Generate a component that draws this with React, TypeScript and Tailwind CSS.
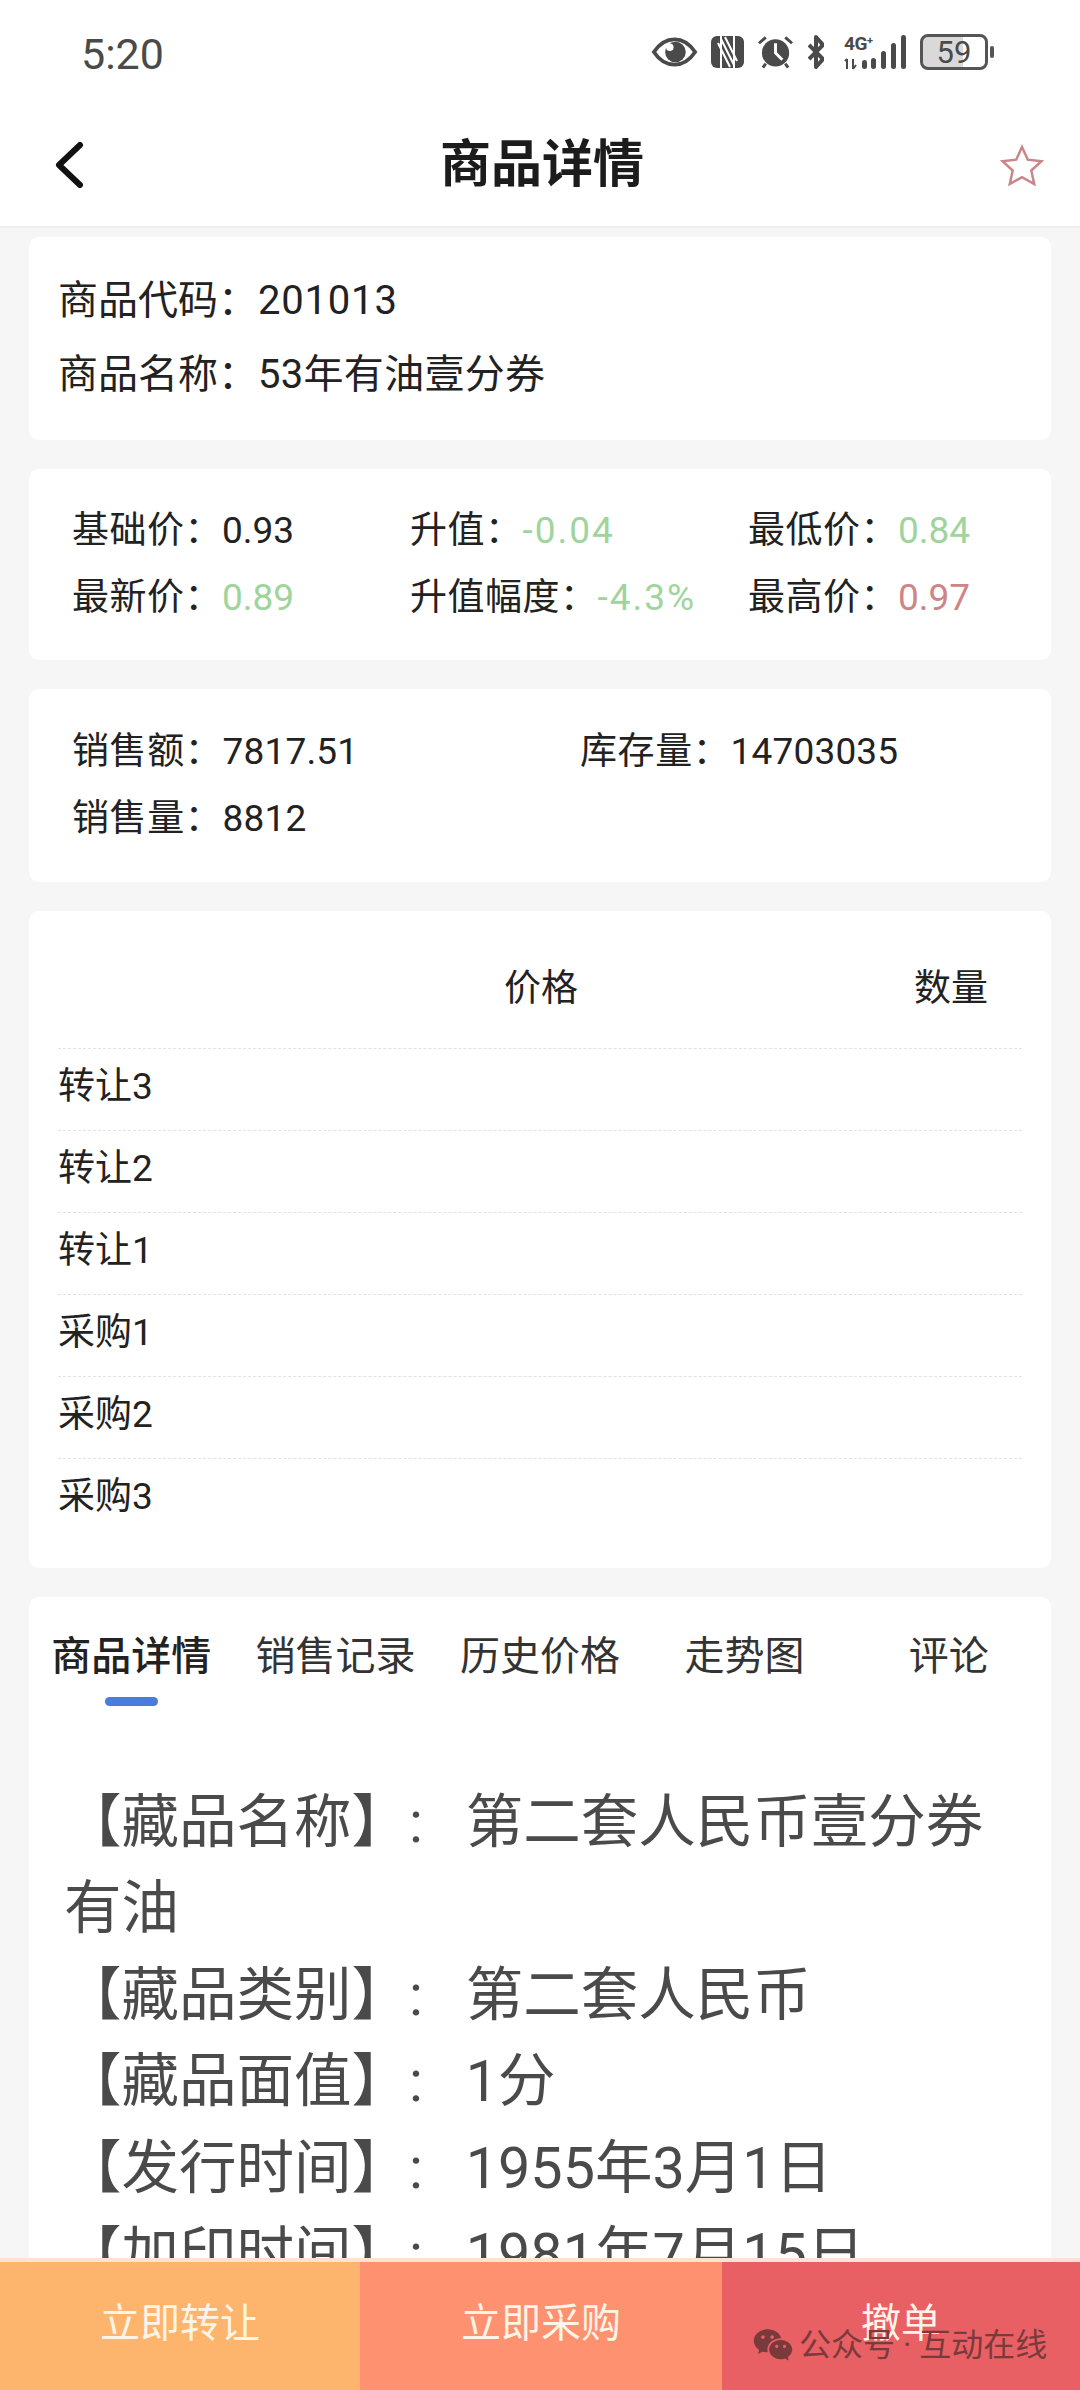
import { RiWechatFill } from "react-icons/ri";

const detailLines = [
  { label: "【藏品名称】", value: "第二套人民币壹分券有油" },
  { label: "【藏品类别】", value: "第二套人民币" },
  { label: "【藏品面值】", value: "1分" },
  { label: "【发行时间】", value: "1955年3月1日" },
  { label: "【加印时间】", value: "1981年7月15日" },
];

const priceStats = [
  { label: "基础价：", value: "0.93", color: "text-[#222222]" },
  { label: "升值：", value: "-0.04", color: "tracking-[2px] text-[#9fd49c]" },
  { label: "最低价：", value: "0.84", color: "text-[#9fd49c]" },
  { label: "最新价：", value: "0.89", color: "text-[#9fd49c]" },
  { label: "升值幅度：", value: "-4.3%", color: "tracking-[2px] text-[#9fd49c]" },
  { label: "最高价：", value: "0.97", color: "text-[#cf8587]" },
];

const salesStats = [
  { label: "销售额：", value: "7817.51" },
  { label: "库存量：", value: "14703035" },
  { label: "销售量：", value: "8812" },
];

const orderRows = ["转让3", "转让2", "转让1", "采购1", "采购2", "采购3"];
const tabs = ["商品详情", "销售记录", "历史价格", "走势图", "评论"];

function StatusIcons() {
  return (
    <div className="flex items-center text-[#4a4a4a]">
      {/* eye */}
      <svg viewBox="0 0 48 32" className="h-[30px] w-[47px]" fill="none">
        <path d="M2 16C8 7 15 2.500 24 2.500S40 7 46 16c-6 9-13 13.500-22 13.500S8 25 2 16Z" stroke="currentColor" strokeWidth="4" />
        <circle cx="25" cy="16" r="11" fill="currentColor" />
        <circle cx="19" cy="11" r="4" fill="white" />
      </svg>
      {/* nfc */}
      <svg viewBox="0 0 33 32" className="ml-[13px] h-[32px] w-[33px]" fill="none">
        <rect x="0" y="0" width="33" height="32" rx="6" fill="currentColor" />
        <path d="M10 0V32M23 0V32M10 3 23 29M14 1 26 25M7 7 19 31" stroke="white" strokeWidth="2" />
      </svg>
      {/* alarm */}
      <svg viewBox="0 0 38 34" className="ml-[13px] h-[34px] w-[37px]" fill="none">
        <circle cx="19" cy="18" r="14" fill="currentColor" />
        <path d="M19 8V18L26 25" stroke="white" strokeWidth="3" />
        <path d="M2 8 9 2M36 8 29 2M6 33 9 29M32 33 29 29" stroke="currentColor" strokeWidth="3" />
      </svg>
      {/* bluetooth */}
      <svg viewBox="0 0 16 34" className="ml-[14px] h-[34px] w-[16px]" fill="none">
        <path d="M1 10 15 24 8 32V2L15 10 1 24" stroke="currentColor" strokeWidth="4" strokeLinejoin="round" />
      </svg>
      {/* 4G+ and signal bars */}
      <svg viewBox="0 0 62 35" className="ml-[20px] h-[35px] w-[62px]" fill="currentColor">
        <text x="0" y="15" fontFamily="Roboto, sans-serif" fontSize="19" fontWeight="700" letterSpacing="-0.5">4G</text>
        <text x="23" y="9" fontFamily="Roboto, sans-serif" fontSize="11" fontWeight="700">+</text>
        <path d="M3 24V34M1 26 3 24M9 24V34M9 34 12 30" stroke="currentColor" strokeWidth="2" fill="none" />
        <rect x="18" y="25" width="5" height="9" rx="2.500" />
        <rect x="27" y="23" width="5" height="11" rx="2.500" />
        <rect x="37" y="16" width="5" height="18" rx="2.500" />
        <rect x="47" y="8" width="5" height="26" rx="2.500" />
        <rect x="57" y="0" width="5" height="34" rx="2.500" />
      </svg>
      {/* battery */}
      <div className="ml-[14px] flex h-[36px] w-[68px] items-center justify-center rounded-[8px] border-[3px] border-[#555555] bg-[linear-gradient(90deg,#d9d9d9_65%,#ffffff_65%)] font-['Roboto',sans-serif] text-[31px] leading-none text-[#4a4a4a]">
        59
      </div>
      <div className="ml-[2px] h-[12px] w-[4px] rounded-full bg-[#555555]" />
    </div>
  );
}

function TopBar() {
  return (
    <header className="shrink-0 border-b-2 border-[#eeeeee] bg-white">
      <div className="flex h-[108px] items-start justify-between pt-[29px] pr-[86px] pl-[81px]">
        <span className="font-['Roboto',sans-serif] text-[43px] leading-[50px] text-[#4a4a4a]">5:20</span>
        <div className="pt-[5px]">
          <StatusIcons />
        </div>
      </div>
      <div className="flex h-[118px] items-center justify-between pr-[36px] pb-[5px] pl-[54px]">
        <svg viewBox="0 0 30 46" className="h-[46px] w-[30px]" fill="none">
          <path d="M26 3 5 23l21 20" stroke="#111111" strokeWidth="6" strokeLinecap="round" strokeLinejoin="round" />
        </svg>
        <h1 className="text-[51px] leading-[60px] font-bold text-[#1c1c1c]">商品详情</h1>
        <svg viewBox="0 0 44 42" className="h-[42px] w-[44px]" fill="none">
          <path d="M22 3l5.800 12.700 13.700 1.500-10.200 9.300 2.900 13.500L22 33.100 9.800 40l2.900-13.500L2.500 17.200l13.700-1.500Z" stroke="#c98587" strokeWidth="2.500" />
        </svg>
      </div>
    </header>
  );
}

export default function App() {
  return (
    <div className="flex h-[2390px] w-[1080px] flex-col overflow-hidden bg-[#f6f6f6] font-['Roboto','Noto_Sans_CJK_SC',sans-serif] text-[#222222]">
      <TopBar />

      <main className="flex min-h-0 flex-1 flex-col gap-[29px] overflow-hidden px-[29px] pt-[9px]">
        <section className="shrink-0 rounded-[10px] bg-white pt-[27px] pr-[29px] pb-[28px] pl-[29px] text-[40px] leading-[74px]">
          <p>
            商品代码：<span className="tracking-[0.8px]">201013</span>
          </p>
          <p>
            商品名称：<span className="tracking-[0.3px]">53年有油壹分券</span>
          </p>
        </section>

        <section className="grid shrink-0 grid-cols-[338px_338px_1fr] rounded-[10px] bg-white pt-[28px] pb-[29px] pl-[43px] text-[37px] leading-[67px]">
          {priceStats.map((s) => (
            <p key={s.label}>
              <span className="tracking-[0.5px]">{s.label}</span>
              <span className={s.color}>{s.value}</span>
            </p>
          ))}
        </section>

        <section className="grid shrink-0 grid-cols-[508px_1fr] rounded-[10px] bg-white pt-[29px] pb-[30px] pl-[43px] text-[37px] leading-[67px]">
          {salesStats.map((s) => (
            <p key={s.label}>
              <span className="tracking-[0.6px]">{s.label}</span>
              <span className="tracking-[0.2px]">{s.value}</span>
            </p>
          ))}
        </section>

        <section className="shrink-0 rounded-[10px] bg-white px-[29px] pb-[28px] text-[37px]">
          <div className="flex h-[137px] items-center justify-between pt-[19px] pr-[34px] pl-[446px]">
            <span>价格</span>
            <span>数量</span>
          </div>
          {orderRows.map((row) => (
            <div key={row} className="flex h-[82px] items-center border-t border-dashed border-[#e2e2e2] pb-[5px]">
              {row}
            </div>
          ))}
        </section>

        <section className="min-h-0 flex-1 rounded-t-[10px] bg-white pt-[32px]">
          <div className="grid grid-cols-5 text-[40px] leading-[56px] text-[#333333]">
            {tabs.map((tab, i) => (
              <div key={tab} className="flex flex-col items-center">
                <span className={i === 0 ? "font-medium text-[#222222]" : ""}>{tab}</span>
                {i === 0 && <div className="mt-[12px] h-[9px] w-[53px] rounded-full bg-[#4b7bdc]" />}
              </div>
            ))}
          </div>
          <div className="mt-[74px] pr-[30px] pl-[35px] text-[57.500px] leading-[86.4px] whitespace-pre-wrap text-[#4a4a4a]">
            {detailLines.map((line) => (
              <p key={line.label}>
                {line.label}:{"   "}
                {line.value}
              </p>
            ))}
          </div>
        </section>
      </main>

      <footer className="relative grid h-[132px] shrink-0 grid-cols-[360px_362px_1fr] border-t-4 border-[#fbe3d4] text-[40px] text-[#fff4e6]">
        <button className="bg-[#fdb56e] pb-[4px]">立即转让</button>
        <button className="bg-[#fe9170] pb-[4px]">立即采购</button>
        <button className="bg-[#e86064] pb-[4px]">撤单</button>
        {/* wechat article watermark over the last button */}
        <div className="absolute top-[62px] left-[752px] flex items-center gap-[5px] text-[32px] leading-[40px] text-[#7a3a3c]">
          <RiWechatFill className="h-[42px] w-[42px]" />
          <span className="whitespace-nowrap">公众号 · 互动在线</span>
        </div>
      </footer>
    </div>
  );
}
